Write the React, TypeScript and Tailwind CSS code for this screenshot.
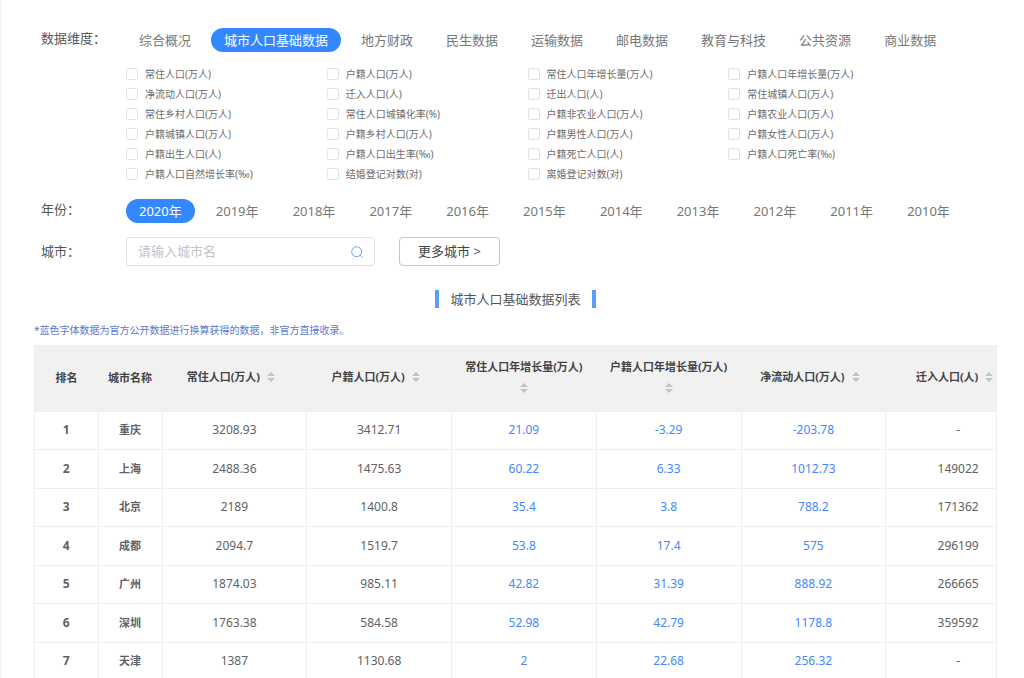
import { useState } from 'react';

const tabs = ['综合概况', '城市人口基础数据', '地方财政', '民生数据', '运输数据', '邮电数据', '教育与科技', '公共资源', '商业数据'];

const indicators = [
  '常住人口(万人)', '户籍人口(万人)', '常住人口年增长量(万人)', '户籍人口年增长量(万人)',
  '净流动人口(万人)', '迁入人口(人)', '迁出人口(人)', '常住城镇人口(万人)',
  '常住乡村人口(万人)', '常住人口城镇化率(%)', '户籍非农业人口(万人)', '户籍农业人口(万人)',
  '户籍城镇人口(万人)', '户籍乡村人口(万人)', '户籍男性人口(万人)', '户籍女性人口(万人)',
  '户籍出生人口(人)', '户籍人口出生率(‰)', '户籍死亡人口(人)', '户籍人口死亡率(‰)',
  '户籍人口自然增长率(‰)', '结婚登记对数(对)', '离婚登记对数(对)',
];

const years = ['2020年', '2019年', '2018年', '2017年', '2016年', '2015年', '2014年', '2013年', '2012年', '2011年', '2010年'];

const columns = [
  { label: '常住人口(万人)', derived: false },
  { label: '户籍人口(万人)', derived: false },
  { label: '常住人口年增长量(万人)', derived: true },
  { label: '户籍人口年增长量(万人)', derived: true },
  { label: '净流动人口(万人)', derived: true },
  { label: '迁入人口(人)', derived: false },
];

const rows = [
  { city: '重庆', values: ['3208.93', '3412.71', '21.09', '-3.29', '-203.78', '-'] },
  { city: '上海', values: ['2488.36', '1475.63', '60.22', '6.33', '1012.73', '149022'] },
  { city: '北京', values: ['2189', '1400.8', '35.4', '3.8', '788.2', '171362'] },
  { city: '成都', values: ['2094.7', '1519.7', '53.8', '17.4', '575', '296199'] },
  { city: '广州', values: ['1874.03', '985.11', '42.82', '31.39', '888.92', '266665'] },
  { city: '深圳', values: ['1763.38', '584.58', '52.98', '42.79', '1178.8', '359592'] },
  { city: '天津', values: ['1387', '1130.68', '2', '22.68', '256.32', '-'] },
];

function Pill({ label, active, onClick }: { label: string; active: boolean; onClick: () => void }) {
  return (
    <button
      type="button"
      aria-pressed={active}
      onClick={onClick}
      className={`h-6 shrink-0 whitespace-nowrap rounded-full px-[13px] leading-6 ${active ? 'bg-[#3388ff] text-white' : 'text-[#777]'}`}
    >
      {label}
    </button>
  );
}

function SortIcon() {
  return (
    <svg viewBox="0 0 8 10" className="mx-[7px] inline-block h-[10px] w-2 align-[-1px]" fill="#c0c4cc" aria-hidden="true">
      <path d="M4 0 8 4H0ZM0 6h8L4 10Z" />
    </svg>
  );
}

export default function App() {
  const [tab, setTab] = useState(tabs[1]);
  const [year, setYear] = useState(years[0]);

  return (
    <main className="h-screen overflow-hidden border-l-2 border-[#f5f5f5] bg-white pl-8 pr-[27px] pt-7 font-['Noto_Sans','Noto_Sans_CJK_SC',sans-serif] text-[13px] text-[#555]">
      <section className="flex pl-[7px]">
        <h2 className="w-[85px] shrink-0 leading-5">数据维度：</h2>
        <div className="min-w-0 flex-1">
          <nav className="flex gap-[7px]">
            {tabs.map((t) => (
              <Pill key={t} label={t} active={t === tab} onClick={() => setTab(t)} />
            ))}
          </nav>
          <div className="mr-[68px] mt-3 grid grid-cols-4">
            {indicators.map((name) => (
              <label key={name} className="flex h-5 items-center gap-[7px] whitespace-nowrap text-[10px] text-[#6c6c6c]">
                <input type="checkbox" className="size-3 shrink-0 appearance-none rounded-[2px] border border-[#dfe2ea] bg-white checked:bg-[#3388ff]" />
                {name}
              </label>
            ))}
          </div>
        </div>
      </section>

      <section className="mt-[15px] flex pl-[7px]">
        <h2 className="w-[85px] shrink-0 leading-5">年份：</h2>
        <div className="flex max-w-[837px] flex-1 justify-between">
          {years.map((y) => (
            <Pill key={y} label={y} active={y === year} onClick={() => setYear(y)} />
          ))}
        </div>
      </section>

      <section className="mt-[14px] flex items-center pl-[7px]">
        <label htmlFor="city" className="w-[85px] shrink-0">城市：</label>
        <div className="flex h-[29px] w-[249px] items-center rounded-[3px] border border-[#dfe1e8] px-[11px]">
          <input id="city" type="text" placeholder="请输入城市名" className="min-w-0 flex-1 outline-none placeholder:text-[#c0c4cc]" />
          <svg viewBox="0 0 12 12" className="size-3" fill="none" stroke="#6a9fff" strokeWidth="1" strokeLinecap="round" aria-hidden="true">
            <circle cx="5.7" cy="5.7" r="5" />
            <path d="m9.4 9.4 1.9 1.9" />
          </svg>
        </div>
        <button type="button" className="ml-6 h-[29px] w-[101px] rounded-[4px] border border-[#c6c6c6] text-[#444]">
          更多城市 &gt;
        </button>
      </section>

      <h1 className="mt-[23px] flex items-center justify-center gap-[11px] leading-5">
        <span className="h-[18px] w-1 bg-[#5a9cff]" />
        城市人口基础数据列表
        <span className="h-[18px] w-1 bg-[#5a9cff]" />
      </h1>

      <p className="mt-[13px] text-[10px] leading-4 text-[#5d79ca]">*蓝色字体数据为官方公开数据进行换算获得的数据，非官方直接收录。</p>

      <div className="mt-[7px] overflow-hidden border-x border-[#ebeef5]">
        <table className="h-[336px] w-[996px] table-fixed border-collapse text-center text-[11px]">
          <thead>
            <tr className="h-[66px] border-b border-[#ebeef5] bg-[#f1f1f1] text-[#444]">
              <th className="w-[63px] font-bold">排名</th>
              <th className="w-16 font-bold">城市名称</th>
              {columns.map((c) => (
                <th key={c.label} className="px-2 pb-[2px] font-bold leading-[21px]">
                  <button type="button" className="w-full">
                    <span className="whitespace-nowrap">{c.label}</span>
                    <wbr />
                    <SortIcon />
                  </button>
                </th>
              ))}
            </tr>
          </thead>
          <tbody>
            {rows.map((r, i) => (
              <tr key={r.city} className="h-[38px] border-b border-[#ebeef5] text-[#606266]">
                <td className="border-r border-[#ebeef5] text-[12px] font-bold">{i + 1}</td>
                <td className="border-r border-[#ebeef5] font-bold">{r.city}</td>
                {r.values.map((v, j) => (
                  <td key={columns[j].label} className={`border-r border-[#ebeef5] text-[12px] ${columns[j].derived ? 'text-[#4488ff]' : ''}`}>
                    {v}
                  </td>
                ))}
              </tr>
            ))}
          </tbody>
        </table>
      </div>
    </main>
  );
}
